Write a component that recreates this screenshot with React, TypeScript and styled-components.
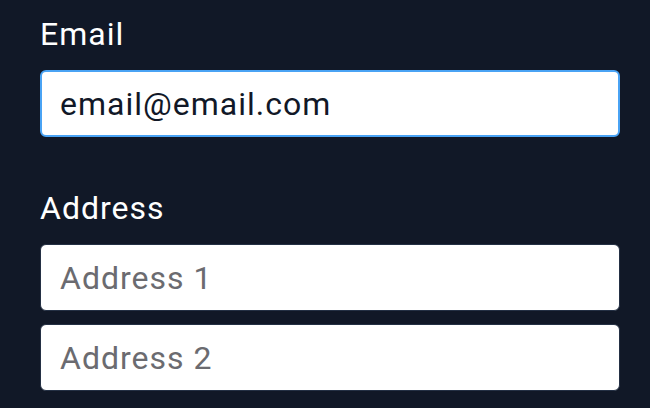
import React from "react";
import styled, { createGlobalStyle } from "styled-components";

const Global = createGlobalStyle`
  html, body {
    margin: 0;
    padding: 0;
    background: #111827;
  }
  body {
    font-family: Roboto, "Liberation Sans", sans-serif;
  }
  * { box-sizing: border-box; }
`;

const Page = styled.form`
  display: flex;
  flex-direction: column;
  gap: 51px;
  padding: 14px 30px 0 40px;
  min-height: 408px;
  background: #111827;
`;

const Field = styled.div`
  display: flex;
  flex-direction: column;
`;

const Label = styled.label`
  font-size: 32px;
  line-height: 40px;
  letter-spacing: 1px;
  color: #ffffff;
  margin-bottom: 16px;
`;

const Stack = styled.div`
  display: flex;
  flex-direction: column;
  gap: 13px;
`;

const Input = styled.input<{ $focused?: boolean }>`
  display: block;
  width: 100%;
  height: 67px;
  margin: 0;
  padding: 0 ${(p) => (p.$focused ? 18 : 19)}px;
  border-radius: 6px;
  border: ${(p) => (p.$focused ? "2px solid #4aa3f4" : "1px solid #243044")};
  background: #ffffff;
  font-family: Roboto, "Liberation Sans", sans-serif;
  font-size: 32px;
  letter-spacing: 1px;
  color: #111827;
  outline: none;

  &::placeholder {
    color: #6b6b70;
    opacity: 1;
  }
`;

export default function App() {
  return (
    <>
      <Global />
      <Page onSubmit={(e) => e.preventDefault()}>
        <Field>
          <Label htmlFor="email">Email</Label>
          <Input id="email" $focused defaultValue="email@email.com" />
        </Field>
        <Field>
          <Label htmlFor="addr1">Address</Label>
          <Stack>
            <Input id="addr1" placeholder="Address 1" />
            <Input id="addr2" placeholder="Address 2" />
          </Stack>
        </Field>
      </Page>
    </>
  );
}
